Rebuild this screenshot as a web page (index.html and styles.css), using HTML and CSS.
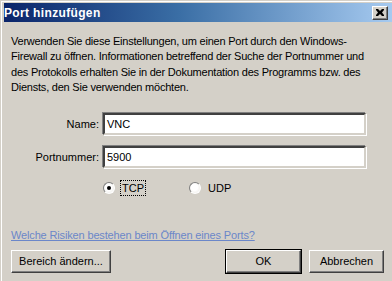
FILE: index.html
```html
<!DOCTYPE html>
<html lang="de">
<head>
    <meta charset="UTF-8">
    <title>Port hinzufügen</title>
    <link rel="stylesheet" href="styles.css">
</head>
<body>
    <div class="window">
        <!-- Title bar -->
        <div class="titlebar">
            <span class="title">Port hinzufügen</span>
            <span class="close-btn">
                <svg width="8" height="7" viewBox="0 0 8 7">
                    <path d="M0 0h2l2 2 2-2h2v1l-2 2.5 2 2.5v1h-2l-2-2-2 2h-2v-1l2-2.5-2-2.5z" fill="#000"/>
                </svg>
            </span>
        </div>

        <div class="content">
            <p class="intro">Verwenden Sie diese Einstellungen, um einen Port durch den Windows-Firewall zu öffnen. Informationen betreffend der Suche der Portnummer und des Protokolls erhalten Sie in der Dokumentation des Programms bzw. des Diensts, den Sie verwenden möchten.</p>

            <div class="form-row">
                <label class="field-label">Name:</label>
                <div class="field">VNC</div>
            </div>
            <div class="form-row">
                <label class="field-label">Portnummer:</label>
                <div class="field">5900</div>
            </div>

            <div class="radio-row">
                <span class="radio-item">
                    <span class="radio checked"></span>
                    <span class="radio-text focused">TCP</span>
                </span>
                <span class="radio-item">
                    <span class="radio"></span>
                    <span class="radio-text">UDP</span>
                </span>
            </div>

            <a href="#" class="risk-link">Welche Risiken bestehen beim Öffnen eines Ports?</a>

            <div class="button-row">
                <button type="button" class="btn btn-wide">Bereich ändern...</button>
                <div class="button-group">
                    <button type="button" class="btn btn-default">OK</button>
                    <button type="button" class="btn">Abbrechen</button>
                </div>
            </div>
        </div>
    </div>
</body>
</html>
```

FILE: styles.css
```css
* {
    box-sizing: border-box;
    margin: 0;
    padding: 0;
}

body {
    width: 392px;
    height: 281px;
    overflow: hidden;
    background-color: #d4d0c8;
    font-family: "Liberation Sans", Arial, sans-serif;
    font-size: 11px;
    color: #000;
}

/* Window frame */
.window {
    height: 281px;
    border-top: 1px solid #d4d0c8;
    border-left: 1px solid #d4d0c8;
    box-shadow: inset 1px 1px 0 #fff;
    padding: 2px 0 0 3px;
}

/* Title bar */
.titlebar {
    height: 19px;
    display: flex;
    align-items: center;
    justify-content: space-between;
    padding: 0 4px 0 0;
    background: linear-gradient(to right, #0a246a 0%, #3a6ea5 45%, #a6caf0 100%);
}

.title {
    color: #fff;
    font-weight: bold;
    font-size: 12px;
    letter-spacing: 0.35px;
}

.close-btn {
    width: 16px;
    height: 14px;
    display: flex;
    align-items: center;
    justify-content: center;
    background-color: #d4d0c8;
    border: 1px solid;
    border-color: #fff #404040 #404040 #fff;
    box-shadow: inset -1px -1px 0 #808080;
}

/* Dialog content */
.content {
    padding: 12px 8px 0 7px;
}

.intro {
    line-height: 15.4px;
    letter-spacing: -0.22px;
    width: 358px;
}

.form-row {
    display: flex;
    align-items: center;
    margin-top: 9px;
}

.form-row:first-of-type {
    margin-top: 16px;
}

.field-label {
    width: 92px;
    text-align: right;
    padding-right: 4px;
}

.field {
    width: 263px;
    height: 22px;
    margin: 1px 0;
    background-color: #fff;
    border: 2px solid;
    border-color: #404040 #d4d0c8 #d4d0c8 #404040;
    box-shadow: -1px -1px 0 #808080, 1px 1px 0 #fff;
    padding: 2px 2px;
    line-height: 14px;
}

/* Protocol radio buttons */
.radio-row {
    display: flex;
    gap: 43px;
    margin: 11px 0 0 92px;
}

.radio-item {
    display: flex;
    align-items: center;
}

.radio {
    width: 12px;
    height: 12px;
    border-radius: 50%;
    background: radial-gradient(circle at 45% 45%, #fff 40%, #e8e6e0 100%);
    border: 1px solid;
    border-color: #808080 #fff #fff #808080;
    margin-right: 5px;
    position: relative;
}

.radio.checked::after {
    content: "";
    position: absolute;
    left: 3px;
    top: 3px;
    width: 4px;
    height: 4px;
    border-radius: 50%;
    background-color: #000;
}

.radio-text {
    padding: 1px 1px;
    border: 1px solid transparent;
}

.radio-text.focused {
    border: 1px dotted #000;
}

.risk-link {
    display: block;
    margin-top: 33px;
    color: #6b87c9;
    text-decoration: underline;
    letter-spacing: -0.15px;
}

/* Bottom buttons */
.button-row {
    display: flex;
    justify-content: space-between;
    margin-top: 9px;
}

.button-group {
    display: flex;
    gap: 8px;
}

.btn {
    height: 23px;
    width: 75px;
    font-family: "Liberation Sans", Arial, sans-serif;
    font-size: 11px;
    background-color: #d4d0c8;
    border: 1px solid;
    border-color: #fff #404040 #404040 #fff;
    box-shadow: inset -1px -1px 0 #808080;
    color: #000;
}

.btn-wide {
    width: 100px;
}

.btn-default {
    outline: 1px solid #000;
}
```
